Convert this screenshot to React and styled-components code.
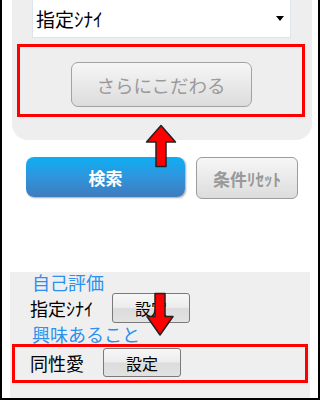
import styled, { createGlobalStyle } from "styled-components";

const Global = createGlobalStyle`
  html, body {
    margin: 0;
    padding: 0;
    background: #fff;
  }
  body {
    font-family: "Noto Sans CJK JP", "Noto Sans", sans-serif;
  }
`;

const Frame = styled.div`
  position: relative;
  box-sizing: border-box;
  width: 320px;
  height: 400px;
  border: 2px solid #000;
  border-top: none;
  background: #fff;
  overflow: hidden;
  display: flex;
  flex-direction: column;
`;

const TopPanel = styled.div`
  margin-left: 10px;
  width: 300px;
  height: 140px;
  box-sizing: border-box;
  background: #eeeeee;
  border-radius: 0 0 16px 16px;
  display: flex;
  flex-direction: column;
`;

const Select = styled.div`
  margin-left: 20px;
  width: 259px;
  height: 38px;
  box-sizing: border-box;
  background: #fff;
  border: 1px solid #dfe3ea;
  border-top: none;
  display: flex;
  align-items: center;
  justify-content: space-between;
  padding: 0 6px 0 3px;
  font-size: 19px;
  color: #000;
`;

const Caret = styled.span`
  width: 0;
  height: 0;
  border-left: 4px solid transparent;
  border-right: 4px solid transparent;
  border-top: 5px solid #000;
`;

const Highlight = styled.div`
  box-sizing: border-box;
  border: 3px solid #ff0000;
  margin-left: ${(p) => p.$left}px;
  width: ${(p) => p.$width}px;
  height: ${(p) => p.$height}px;
  margin-top: ${(p) => p.$top || 0}px;
`;

const MoreBox = styled(Highlight)`
  display: flex;
  justify-content: center;
  padding-top: 15px;
`;

const MoreButton = styled.button`
  width: 181px;
  height: 45px;
  box-sizing: border-box;
  border: 1px solid #a2a2a2;
  border-radius: 7px;
  background: linear-gradient(#f6f6f6, #dcdcdc);
  color: #9a9a9a;
  font-family: inherit;
  font-size: 18.5px;
  padding: 0;
`;

const ButtonRow = styled.div`
  display: flex;
  align-items: flex-start;
  gap: 11px;
  margin-top: 17px;
  padding-left: 24px;
  height: 42px;
`;

const SearchButton = styled.button`
  width: 159px;
  height: 40px;
  border: none;
  border-radius: 8px;
  background: linear-gradient(#0eaef4, #2f95dc 50%, #3f7bbd);
  box-shadow: 1px 1px 2px rgba(0, 0, 0, 0.35);
  color: #fff;
  font-family: inherit;
  font-weight: bold;
  font-size: 17px;
  padding: 0;
`;

const ResetButton = styled.button`
  width: 102px;
  height: 42px;
  box-sizing: border-box;
  border: 1px solid #9c9c9c;
  border-radius: 6px;
  background: linear-gradient(#f7f7f7, #dcdcdc);
  color: #999;
  font-family: inherit;
  font-weight: bold;
  font-size: 17px;
  padding: 0;
`;

const BottomPanel = styled.div`
  margin-top: 73px;
  margin-left: 8px;
  width: 300px;
  flex: 1;
  background: #efefef;
  display: flex;
  flex-direction: column;
`;

const Heading = styled.div`
  color: #2b90ee;
  font-size: 18px;
  line-height: 20px;
  padding-left: 22px;
`;

const Row = styled.div`
  display: flex;
  align-items: center;
  height: 32px;
  padding-left: 20px;
  font-size: 18px;
  color: #000;
`;

const Label = styled.span`
  width: ${(p) => p.$w}px;
`;

const SetButton = styled.button`
  width: 78px;
  height: ${(p) => p.$h || 30}px;
  box-sizing: border-box;
  border: 1px solid #7a7a7a;
  border-radius: 3px;
  background: linear-gradient(#f7f7f7, #ececec 48%, #dcdcdc 52%, #e2e2e2);
  color: #000;
  font-family: inherit;
  font-size: 16px;
  padding: 0;
`;

const PickRow = styled(Highlight)`
  display: flex;
  align-items: center;
  padding-left: 15px;
  padding-bottom: 2px;
  font-size: 18px;
`;

const Arrow = styled.svg`
  position: absolute;
  left: ${(p) => p.$x}px;
  top: ${(p) => p.$y}px;
`;

export default function App() {
  return (
    <>
      <Global />
      <Frame>
        <TopPanel>
          <Select>
            <span>指定ｼﾅｲ</span>
            <Caret />
          </Select>
          <MoreBox $left={5} $width={288} $height={73} $top={6}>
            <MoreButton>さらにこだわる</MoreButton>
          </MoreBox>
        </TopPanel>

        <ButtonRow>
          <SearchButton>検索</SearchButton>
          <ResetButton>条件ﾘｾｯﾄ</ResetButton>
        </ButtonRow>

        <BottomPanel>
          <Heading>自己評価</Heading>
          <Row>
            <Label $w={82}>指定ｼﾅｲ</Label>
            <SetButton>設定</SetButton>
          </Row>
          <Heading>興味あること</Heading>
          <PickRow $left={2} $width={296} $height={39}>
            <Label $w={73}>同性愛</Label>
            <SetButton $h={29}>設定</SetButton>
          </PickRow>
        </BottomPanel>

        <Arrow $x={143} $y={124} width="32" height="45" viewBox="0 0 32 45">
          <polygon
            points="16,1.5 30.5,18 21,18 21,42.5 11,42.5 11,18 1.5,18"
            fill="#ff0000"
            stroke="#222"
            strokeWidth="1.5"
            strokeLinejoin="round"
          />
        </Arrow>
        <Arrow $x={140} $y={292} width="32" height="45" viewBox="0 0 32 45">
          <polygon
            points="13,1.5 23,1.5 23,24.5 31,24.5 18,43 5,24.5 13,24.5"
            fill="#ff0000"
            stroke="#222"
            strokeWidth="1.5"
            strokeLinejoin="round"
          />
        </Arrow>
      </Frame>
    </>
  );
}
